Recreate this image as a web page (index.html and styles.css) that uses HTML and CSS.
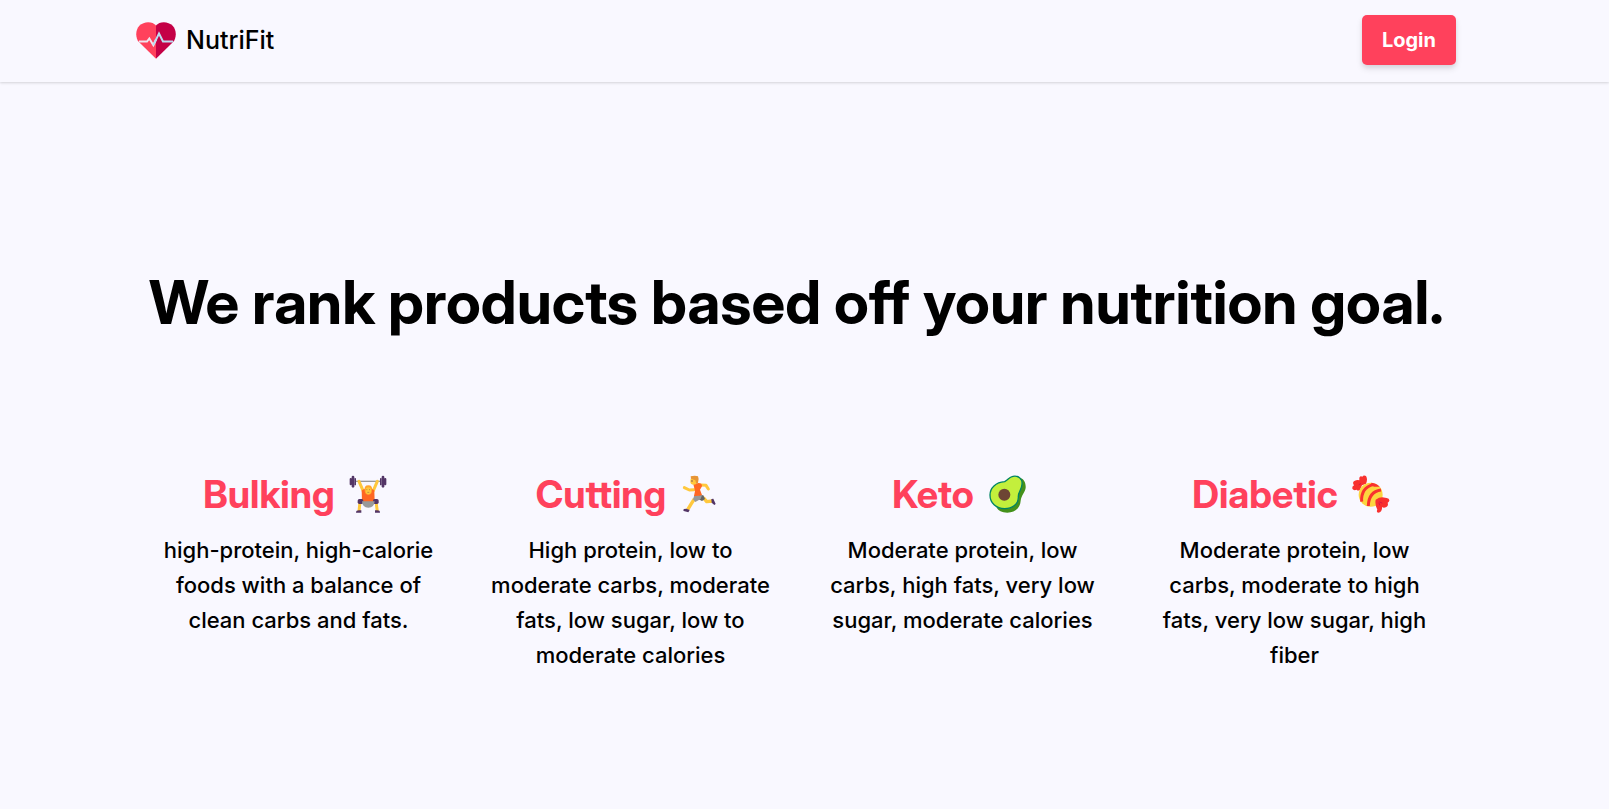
FILE: index.html
```html
<!DOCTYPE html>
<html lang="en">
<head>
<meta charset="utf-8">
<meta name="viewport" content="width=device-width, initial-scale=1">
<title>NutriFit</title>
<link rel="stylesheet" href="styles.css">
</head>
<body>
<header class="header">
  <nav class="nav">
    <a class="brand" href="#">
      <svg class="brand-logo" viewBox="0 0 120 110" aria-hidden="true">
        <path fill="#ff415c" d="M60 10C50-3 24-4 10 11C-2 24-2 46 8 59L60 110Z"/>
        <path fill="#c40046" d="M60 10C70-3 96-4 110 11C122 24 122 46 112 59L60 110Z"/>
        <path fill="none" stroke="#f0e4ee" stroke-width="6" d="M9 58H33L40 49L52 69L60 52"/>
        <path fill="none" stroke="#bddcf0" stroke-width="6" d="M52 69L69 34L81 58H111"/>
      </svg>
      <span>NutriFit</span>
    </a>
    <button class="login" type="button">Login</button>
  </nav>
</header>
<main class="main">
  <h1 class="title">We rank products based off your nutrition goal.</h1>
  <div class="goals">
    <section class="goal">
      <h2 class="goal-name">Bulking
        <svg class="goal-icon" viewBox="12 28 150 120" aria-hidden="true">
          <path stroke="#999" stroke-width="4" d="M48 50H121"/>
          <path stroke="#ffc83d" stroke-width="9" stroke-linecap="round" fill="none" d="M57 50L69 78M112 50L100 78"/>
          <path fill="#ff6723" d="M65 78Q68 73 75 73H94Q101 73 103 78L104 112H66Z"/>
          <path fill="#ffa52e" d="M74 79Q71 62 85 62Q99 62 96 79Q95 90 85 91Q75 90 74 79Z"/>
          <ellipse cx="85" cy="78" rx="8" ry="10" fill="#ffc83d"/>
          <path fill="none" stroke="#9b704f" stroke-width="2" d="M79 75H82M87 75H90M82 83H88"/>
          <path stroke="#ffc83d" stroke-width="9" d="M60 111L57 140M108 111L112 140"/>
          <rect x="53" y="103" width="17" height="15" rx="5" fill="#533566"/>
          <rect x="99" y="103" width="17" height="15" rx="5" fill="#533566"/>
          <path fill="#999" d="M66 110H104Q103 129 85 129Q67 129 66 110Z"/>
          <path fill="#533566" d="M48 144Q48 137 57 137H64V144ZM105 144V137H112Q120 137 120 144Z"/>
          <rect x="29" y="40" width="7" height="22" rx="3" fill="#533566"/>
          <rect x="35" y="33" width="8" height="36" rx="4" fill="#533566"/>
          <rect x="43" y="40" width="5" height="22" rx="2" fill="#533566"/>
          <rect x="120" y="40" width="5" height="22" rx="2" fill="#533566"/>
          <rect x="125" y="33" width="8" height="36" rx="4" fill="#533566"/>
          <rect x="132" y="40" width="7" height="22" rx="3" fill="#533566"/>
        </svg>
      </h2>
      <p class="goal-text">high-protein, high-calorie foods with a balance of clean carbs and fats.</p>
    </section>
    <section class="goal">
      <h2 class="goal-name">Cutting
        <svg class="goal-icon" viewBox="15 28 150 120" aria-hidden="true">
          <path fill="none" stroke="#ffc83d" stroke-width="9" stroke-linecap="round" stroke-linejoin="round" d="M72 75L58 76L43 69M91 61L108 62L115 73"/>
          <path fill="none" stroke="#ffc83d" stroke-width="10" stroke-linejoin="round" d="M100 99L110 111L128 109M73 103L64 117L53 135"/>
          <path fill="#636363" d="M86 91L100 92L105 103L96 109L86 104Z"/>
          <path fill="#999" d="M73 92H96L92 103L76 112L69 104Z"/>
          <path fill="#ff6723" d="M70 59L85 55Q96 55 96 65L90 75L96 91Q86 95 72 94L75 79Z"/>
          <path fill="#ffc83d" d="M62 42Q72 36 81 42L81 54Q78 61 69 60Q61 60 61 50Z"/>
          <path fill="#e79535" d="M62 35Q75 31 84 35Q88 43 84 54L79 58L76 47L63 42Z"/>
          <circle cx="66" cy="49" r="2" fill="#533566"/>
          <path fill="#533566" d="M42 133Q39 136 41 139L55 143L59 136L49 132ZM124 103L130 102L137 118L133 121L125 114Z"/>
        </svg>
      </h2>
      <p class="goal-text">High protein, low to moderate carbs, moderate fats, low sugar, low to moderate calories</p>
    </section>
    <section class="goal">
      <h2 class="goal-name">Keto
        <svg class="goal-icon" viewBox="21 28 150 120" aria-hidden="true">
          <path fill="#44911b" d="M126 39C142 38 150 52 149 69C148 82 136 91 134 108C133 130 116 144 94 144C73 144 61 132 61 125Z"/>
          <path fill="#c3ef3c" stroke="#008463" stroke-width="4" d="M86 51C98 44 99 37 111 35C128 32 140 43 138 59C137 77 126 81 127 97C128 119 108 132 86 132C60 132 42 115 42 91C42 70 59 53 86 51Z"/>
          <circle cx="85" cy="90" r="18" fill="#6d4534"/>
        </svg>
      </h2>
      <p class="goal-text">Moderate protein, low carbs, high fats, very low sugar, moderate calories</p>
    </section>
    <section class="goal">
      <h2 class="goal-name">Diabetic
        <svg class="goal-icon" viewBox="19 28 150 120" aria-hidden="true">
          <path fill="#f8312f" d="M64 62L58 75Q52 80 48 75Q39 79 35 72Q33 66 40 62Q34 53 41 49Q49 45 56 47V39Q59 33 65 36Q69 30 76 34Q82 44 76 57Z"/>
          <circle cx="90" cy="90" r="36" fill="#fcd53f"/>
          <path fill="none" stroke="#f8312f" stroke-width="9" d="M98 59Q60 70 63 111M121 76Q84 81 83 124"/>
          <path fill="#f8312f" d="M92 54Q108 55 117 66Q104 68 92 63Z"/>
          <path fill="#f8312f" d="M105 105Q115 98 125 98L138 100Q147 101 146 108Q144 112 141 114Q144 124 137 127Q129 131 124 127Q125 142 113 144Q106 142 110 135Q102 120 105 105Z"/>
          <path fill="none" stroke="#ca0b4a" stroke-width="2" stroke-linecap="round" d="M117 112L124 115M115 115L117 121M60 57L55 60"/>
        </svg>
      </h2>
      <p class="goal-text">Moderate protein, low carbs, moderate to high fats, very low sugar, high fiber</p>
    </section>
  </div>
</main>
</body>
</html>
```

FILE: styles.css
```css
* {
  box-sizing: border-box;
}

body {
  margin: 0;
  background: #f9f8ff;
  color: #000;
  font-family: Inter, "Liberation Sans", sans-serif;
}

.header {
  padding: 15px 17px 17px 0;
  box-shadow: 0 1px 3px rgba(0, 0, 0, 0.1), 0 1px 2px rgba(0, 0, 0, 0.06);
}

.nav {
  display: flex;
  align-items: center;
  justify-content: space-between;
  max-width: 1320px;
  margin: 0 auto;
}

.brand {
  display: flex;
  align-items: center;
  gap: 10px;
  color: inherit;
  font-size: 25px;
  font-weight: 500;
  line-height: 36px;
  text-decoration: none;
}

.brand-logo {
  width: 40px;
  height: 37px;
}

.login {
  height: 50px;
  padding: 0 20px;
  border: 0;
  border-radius: 5px;
  background: #ff415c;
  color: #fff;
  font: inherit;
  font-size: 20px;
  font-weight: 700;
  box-shadow: 0 4px 6px rgba(0, 0, 0, 0.1), 0 2px 4px rgba(0, 0, 0, 0.06);
}

.main {
  padding: 184px 16px 128px 0;
}

.title {
  margin: 0 auto 132px;
  font-family: "Inter Display", Inter, "Liberation Sans", sans-serif;
  font-size: 60px;
  font-weight: 700;
  font-variation-settings: "opsz" 32;
  line-height: 72px;
  text-align: center;
}

.goals {
  display: grid;
  grid-template-columns: repeat(4, 1fr);
  gap: 48px;
  max-width: 1280px;
  margin: 0 auto;
}

.goal {
  text-align: center;
}

.goal-name {
  display: flex;
  align-items: center;
  justify-content: center;
  gap: 9px;
  margin: 0 0 15px;
  color: #ff415c;
  font-family: "Inter Display", Inter, "Liberation Sans", sans-serif;
  font-size: 38px;
  font-weight: 700;
  font-variation-settings: "opsz" 32;
  line-height: 48px;
}

.goal-icon {
  width: 50px;
  height: 40px;
}

.goal-text {
  margin: 0;
  font-size: 22px;
  font-weight: 500;
  line-height: 35px;
}
```
